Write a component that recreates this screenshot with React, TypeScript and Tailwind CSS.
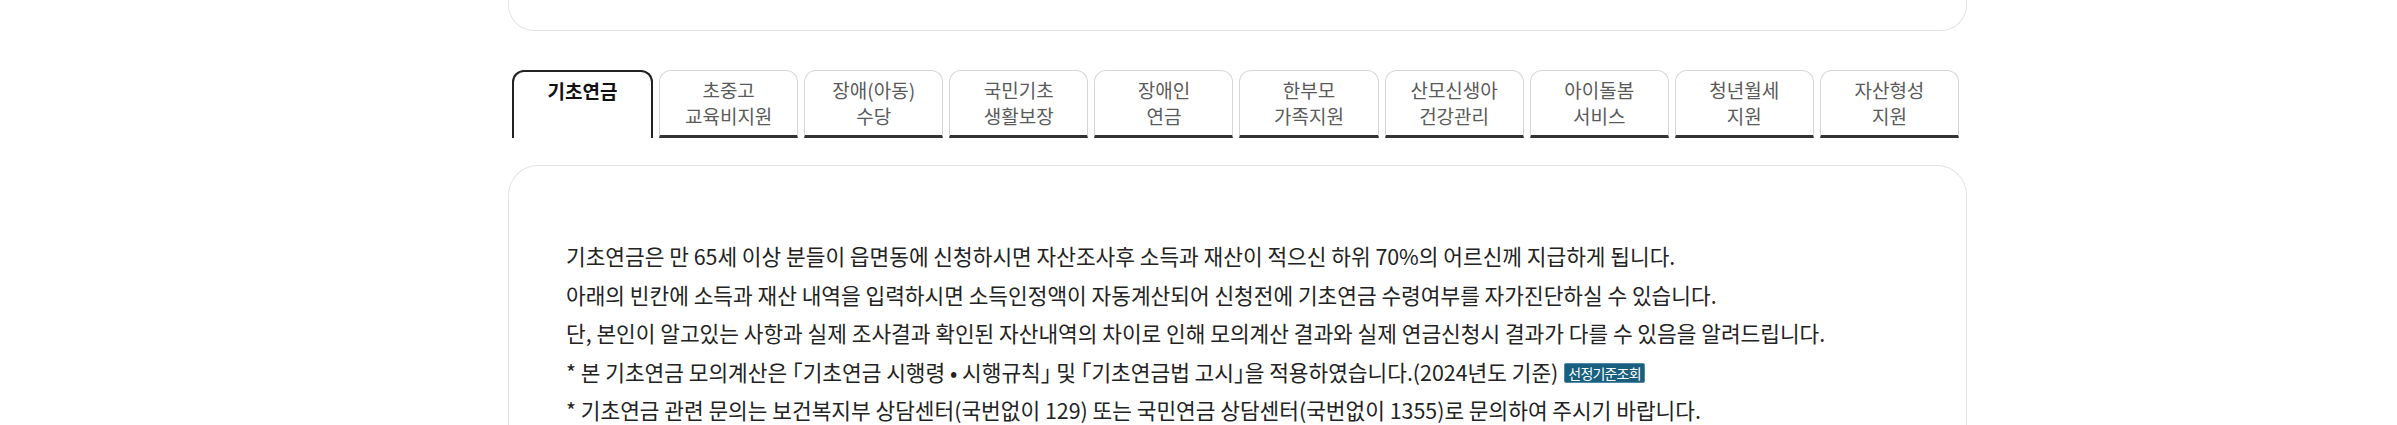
const tabs = [
  ["기초연금"],
  ["초중고", "교육비지원"],
  ["장애(아동)", "수당"],
  ["국민기초", "생활보장"],
  ["장애인", "연금"],
  ["한부모", "가족지원"],
  ["산모신생아", "건강관리"],
  ["아이돌봄", "서비스"],
  ["청년월세", "지원"],
  ["자산형성", "지원"],
];

export default function App() {
  const active = 0;

  return (
    <div className="w-[2397px] h-[425px] overflow-hidden bg-white font-['Noto_Sans_CJK_KR',sans-serif] text-[#222]">
      <div className="ml-[508px] w-[1459px]">
        {/* Previous panel (tail end) */}
        <div className="h-[31px] rounded-b-[26px] border border-t-0 border-[#e4e4e4]" />

        {/* Tabs */}
        <ul className="mt-[39px] flex gap-[6px] pl-[4px] pr-[8px]">
          {tabs.map((label, i) => (
            <li
              key={i}
              className={`flex-1 h-[68px] rounded-t-[12px] pt-[6px] text-center text-[19px] leading-[26px] ${
                i === active
                  ? "border-2 border-b-0 border-[#222] font-bold text-[#111]"
                  : "border border-[#d6d6d6] border-b-[3px] border-b-[#333] text-[#5a5a5a]"
              }`}
            >
              {label.map((line) => (
                <div key={line}>{line}</div>
              ))}
            </li>
          ))}
        </ul>

        {/* Content panel */}
        <div className="mt-[27px] h-[400px] rounded-t-[30px] border border-b-0 border-[#e4e4e4] pl-[57px] pt-[71px] text-[21.4px] leading-[38.6px]">
          <p>기초연금은 만 65세 이상 분들이 읍면동에 신청하시면 자산조사후 소득과 재산이 적으신 하위 70%의 어르신께 지급하게 됩니다.</p>
          <p>아래의 빈칸에 소득과 재산 내역을 입력하시면 소득인정액이 자동계산되어 신청전에 기초연금 수령여부를 자가진단하실 수 있습니다.</p>
          <p>단, 본인이 알고있는 사항과 실제 조사결과 확인된 자산내역의 차이로 인해 모의계산 결과와 실제 연금신청시 결과가 다를 수 있음을 알려드립니다.</p>
          <p>
            * 본 기초연금 모의계산은 ｢기초연금 시행령 • 시행규칙｣ 및 ｢기초연금법 고시｣을 적용하였습니다.(2024년도 기준)
            <button className="ml-[6px] inline-flex h-[20px] items-center rounded-[2px] border border-[#4d8aa6] bg-[#1b5f7e] px-[3px] align-[2px] text-[14px] leading-none tracking-[-0.8px] text-white">
              선정기준조회
            </button>
          </p>
          <p>* 기초연금 관련 문의는 보건복지부 상담센터(국번없이 129) 또는 국민연금 상담센터(국번없이 1355)로 문의하여 주시기 바랍니다.</p>
        </div>
      </div>
    </div>
  );
}
